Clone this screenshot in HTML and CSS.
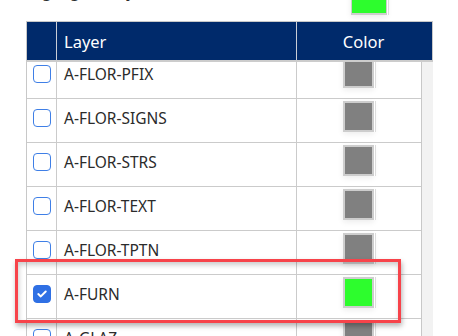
FILE: index.html
```html
<!DOCTYPE html>
<html lang="en">
<head>
    <meta charset="UTF-8">
    <meta name="viewport" content="width=device-width, initial-scale=1.0">
    <title>Layers</title>
    <link rel="stylesheet" href="styles.css">
</head>
<body>

    <!-- Cor de destaque -->
    <div class="top">
        <span class="label">Highlight Only</span>
        <span class="swatch big" style="background-color: #2dfd2d;"></span>
    </div>

    <div class="panel">
        <div class="head">
            <div class="cell chk"></div>
            <div class="cell name">Layer</div>
            <div class="cell color">Color</div>
        </div>

        <div class="body">
            <div class="rows">
                <div class="row">
                    <div class="cell chk"><span class="box"></span></div>
                    <div class="cell name">A-FLOR-PFIX</div>
                    <div class="cell color"><span class="swatch" style="background-color: #808080;"></span></div>
                </div>
                <div class="row">
                    <div class="cell chk"><span class="box"></span></div>
                    <div class="cell name">A-FLOR-SIGNS</div>
                    <div class="cell color"><span class="swatch" style="background-color: #808080;"></span></div>
                </div>
                <div class="row">
                    <div class="cell chk"><span class="box"></span></div>
                    <div class="cell name">A-FLOR-STRS</div>
                    <div class="cell color"><span class="swatch" style="background-color: #808080;"></span></div>
                </div>
                <div class="row">
                    <div class="cell chk"><span class="box"></span></div>
                    <div class="cell name">A-FLOR-TEXT</div>
                    <div class="cell color"><span class="swatch" style="background-color: #808080;"></span></div>
                </div>
                <div class="row">
                    <div class="cell chk"><span class="box"></span></div>
                    <div class="cell name">A-FLOR-TPTN</div>
                    <div class="cell color"><span class="swatch" style="background-color: #808080;"></span></div>
                </div>
                <div class="row">
                    <div class="cell chk">
                        <span class="box checked">
                            <svg width="10" height="8" viewBox="0 0 10 8"><path d="M1.3 4.1 L3.8 6.4 L8.7 1.5" fill="none" stroke="#fff" stroke-width="2" stroke-linecap="round" stroke-linejoin="round"/></svg>
                        </span>
                    </div>
                    <div class="cell name">A-FURN</div>
                    <div class="cell color"><span class="swatch" style="background-color: #2dfd2d;"></span></div>
                </div>
                <div class="row">
                    <div class="cell chk"><span class="box"></span></div>
                    <div class="cell name">A-GLAZ</div>
                    <div class="cell color"><span class="swatch" style="background-color: #808080;"></span></div>
                </div>
            </div>
            <div class="scrollbar"></div>
        </div>
    </div>

    <!-- Marcação vermelha -->
    <div class="mark"></div>

</body>
</html>
```

FILE: styles.css
```css
* {
    margin: 0;
    padding: 0;
    box-sizing: border-box;
}

body {
    font-family: 'Noto Sans', sans-serif;
    background-color: #ffffff;
    color: #2b2b2b;
    width: 458px;
    height: 336px;
    overflow: hidden;
    position: relative;
}

.top {
    display: flex;
    align-items: flex-end;
    height: 15px;
    margin-left: 26px;
    width: 361px;
    justify-content: space-between;
}

.top .label {
    font-size: 16px;
    line-height: 16px;
    margin-bottom: 16px;
}

.swatch {
    display: inline-block;
    width: 31px;
    height: 31px;
    border: 2px solid #cdcdcd;
    box-shadow: 1px 0 0 #ffffff, 2px 0 0 #dcdcdc, 0 2px 6px rgba(0, 0, 0, 0.08);
}

.swatch.big {
    width: 36px;
    height: 36px;
    border-width: 1px 1px 2px 1px;
}

.panel {
    margin-top: 6px;
    margin-left: 26px;
    width: 407px;
}

.head {
    display: flex;
    height: 41px;
    background-color: #002a6b;
    color: #ffffff;
    border-top: 1px solid #c8c8c8;
    border-left: 1px solid #c8c8c8;
    border-right: 1px solid #c8c8c8;
    border-bottom: 2px solid #cccccc;
    font-size: 16.5px;
}

.head .cell {
    display: flex;
    align-items: center;
}

.head .chk {
    width: 30px;
    border-right: 1px solid #c9cdd6;
}

.head .name {
    width: 240px;
    padding-left: 7px;
    border-right: 1px solid #c9cdd6;
}

.head .color {
    flex: 1;
    justify-content: center;
    padding-right: 2px;
}

.body {
    display: flex;
    height: 280px;
    overflow: hidden;
}

.rows {
    width: 396px;
    margin-top: -7px;
    border-left: 1px solid #c8c8c8;
    border-right: 1px solid #c8c8c8;
}

.row {
    display: flex;
    height: 44px;
    border-bottom: 1px solid #cbcbcb;
    font-size: 15.5px;
}

.row .cell {
    display: flex;
    align-items: center;
    padding-bottom: 6px;
}

.row .chk {
    width: 30px;
    justify-content: center;
    border-right: 1px solid #cbcbcb;
}

.row .name {
    width: 240px;
    padding-left: 7px;
    border-right: 1px solid #cbcbcb;
}

.row .color {
    flex: 1;
    justify-content: center;
    padding-bottom: 8px;
    padding-right: 2px;
}

.box {
    display: flex;
    align-items: center;
    justify-content: center;
    width: 18px;
    height: 18px;
    border: 1.5px solid #3f7fe6;
    border-radius: 4px;
    background-color: #ffffff;
}

.box.checked {
    background-color: #2f70e4;
    border-color: #2f70e4;
}

.scrollbar {
    width: 11px;
    background-color: #f2f2f2;
}

.mark {
    position: absolute;
    left: 15px;
    top: 259px;
    width: 386px;
    height: 64px;
    border: 3px solid #f7434a;
    box-shadow: 1px 3px 5px rgba(0, 0, 0, 0.3), inset 1px 3px 5px rgba(0, 0, 0, 0.2);
}
```
